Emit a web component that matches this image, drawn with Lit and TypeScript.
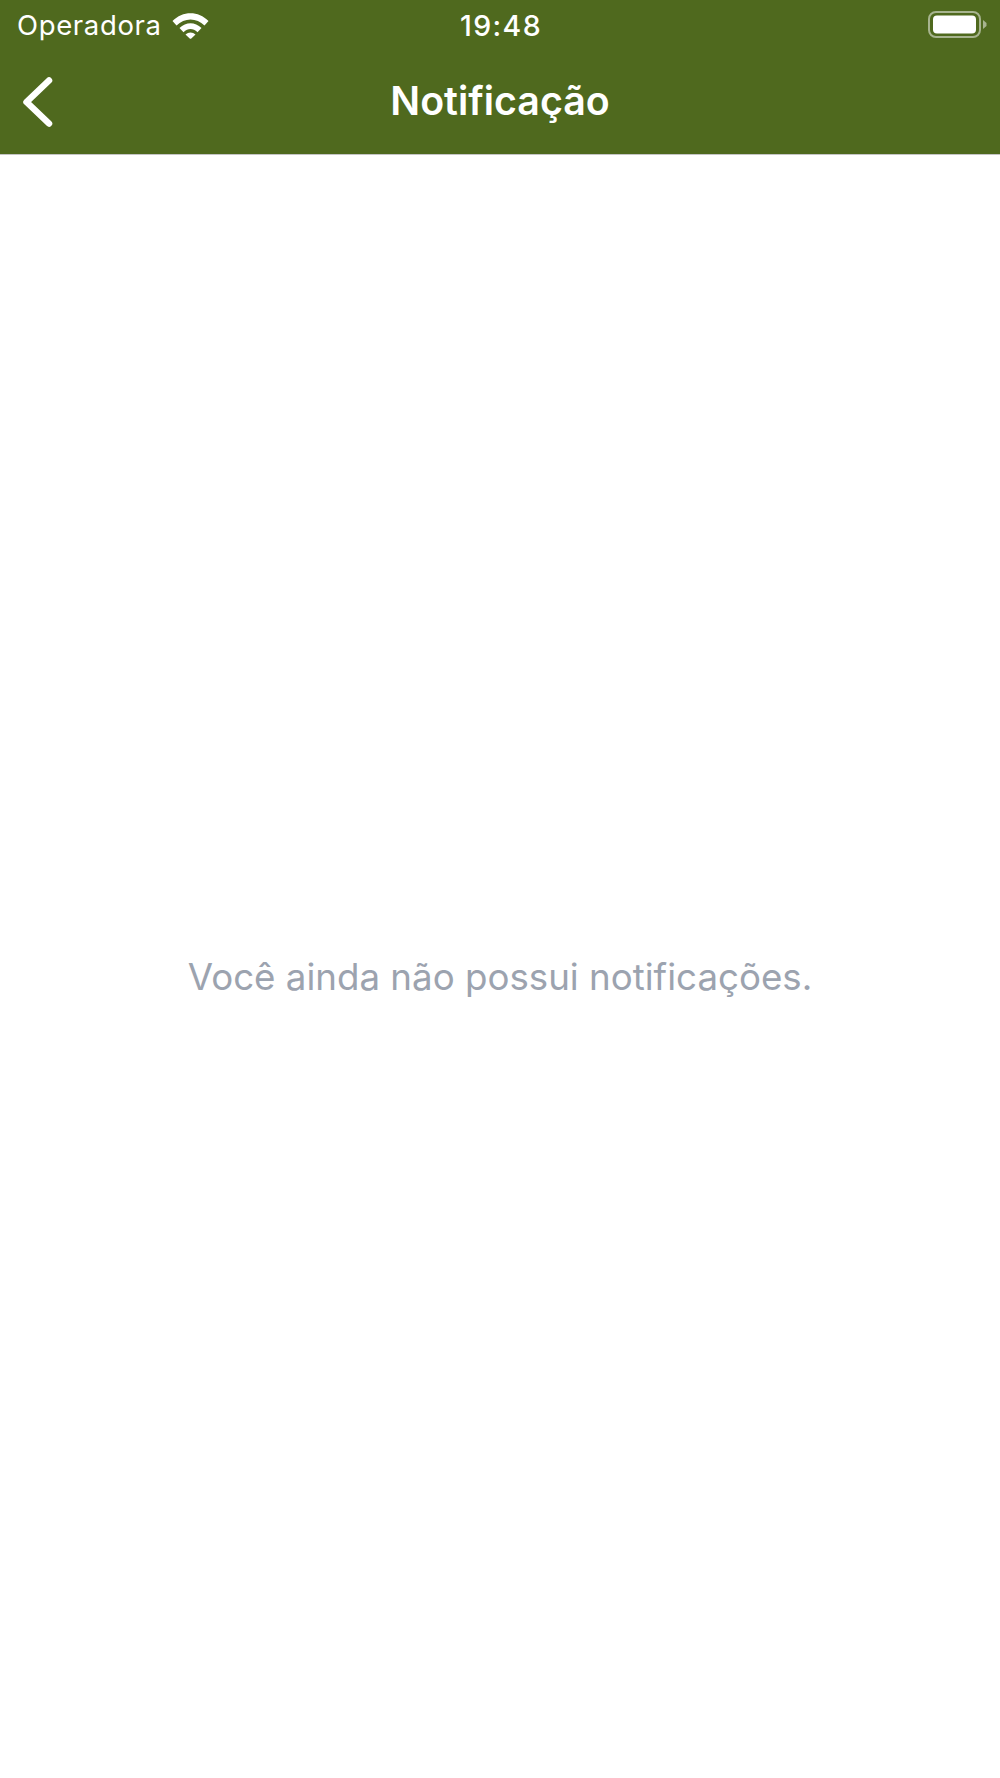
import { LitElement, html, css } from 'lit';
import { customElement } from 'lit/decorators.js';

@customElement('app-root')
export class AppRoot extends LitElement {
  static styles = css`
    :host {
      display: flex;
      flex-direction: column;
      width: 1000px;
      height: 1778px;
      background: #ffffff;
      font-family: 'Inter', 'Liberation Sans', sans-serif;
    }

    .header {
      background: #4f691e;
      color: #ffffff;
      height: 154px;
      border-bottom: 1px solid #c4c4c4;
      flex: none;
    }

    .status {
      display: grid;
      grid-template-columns: 1fr auto 1fr;
      align-items: center;
      height: 50px;
      padding: 0 13px 0 17px;
    }

    .status-left {
      display: flex;
      align-items: center;
      gap: 10px;
      font-size: 27.5px;
      letter-spacing: 0.65px;
      font-weight: 400;
    }

    .clock {
      font-size: 28.5px;
      font-weight: 500;
      letter-spacing: 1.4px;
      margin-right: 2px;
    }

    .battery {
      display: flex;
      justify-content: flex-end;
      align-items: center;
    }

    .nav {
      display: grid;
      grid-template-columns: 1fr auto 1fr;
      align-items: center;
      height: 104px;
      padding: 0 22px;
      box-sizing: border-box;
    }

    .title {
      font-size: 39.3px;
      font-weight: 600;
      padding-bottom: 4px;
    }

    .back {
      display: block;
    }

    .empty {
      flex: 1;
      display: flex;
      justify-content: center;
      align-items: center;
      padding-top: 19px;
      box-sizing: border-box;
      color: #9ca3af;
      font-size: 36.7px;
      font-weight: 400;
    }
  `;

  render() {
    return html`
      <div class="header">
        <div class="status">
          <div class="status-left">
            <span>Operadora</span>
            <svg width="37" height="27" viewBox="0 0 37 27">
              <path d="M0.500 9C10.500 -1.500 26.500 -1.500 36.500 9L32.500 13.500C24.500 5.500 12.500 5.500 4.500 13.500Z" fill="#fff" />
              <path d="M7.500 16C14 9.500 23 9.500 29.500 16L25.500 20.300C21 16 16 16 11.500 20.300Z" fill="#fff" />
              <path d="M13.500 22.500C16.500 19.800 20.500 19.800 23.500 22.500L19.300 26.500Q18.500 27 17.700 26.500Z" fill="#fff" />
            </svg>
          </div>
          <span class="clock">19:48</span>
          <div class="battery">
            <svg width="59" height="28" viewBox="0 0 59 28">
              <rect x="1" y="1" width="51" height="25" rx="7" fill="none" stroke="#a7b48f" stroke-width="2" />
              <rect x="5" y="4.500" width="43" height="18" rx="4" fill="#fff" />
              <path d="M55 9L58.500 12V15L55 18Z" fill="#a7b48f" />
            </svg>
          </div>
        </div>
        <div class="nav">
          <svg class="back" width="32" height="52" viewBox="0 0 32 52">
            <path d="M27 4.500L4.500 26L27 47.500" fill="none" stroke="#fff" stroke-width="6.500" stroke-linecap="round" stroke-linejoin="round" />
          </svg>
          <span class="title">Notificação</span>
          <span></span>
        </div>
      </div>
      <div class="empty">Você ainda não possui notificações.</div>
    `;
  }
}
